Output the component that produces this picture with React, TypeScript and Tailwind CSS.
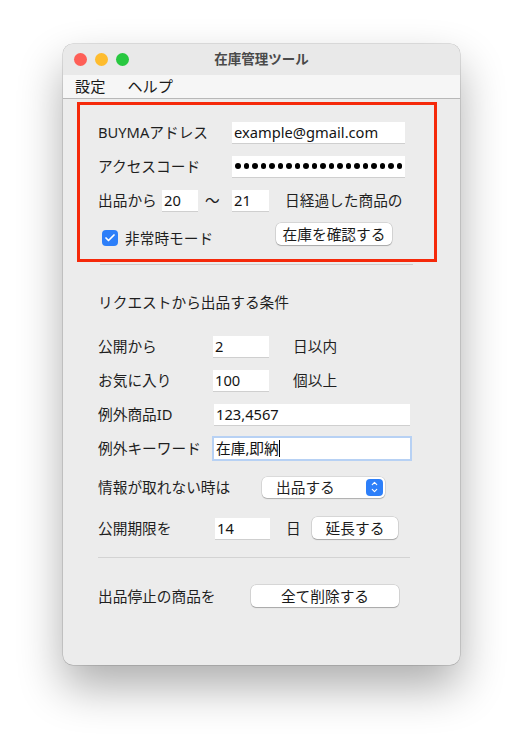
import { Check, ChevronUp, ChevronDown } from "lucide-react";

const FONT = {
  fontFamily: '"Noto Sans", "Noto Sans CJK JP", sans-serif',
};

function Field({ value, width, focused }: { value?: string; width: string; focused?: boolean }) {
  return (
    <div
      className={`${width} h-[21px] bg-white flex items-center pl-[2px] overflow-hidden whitespace-nowrap text-[#141414] ${
        focused
          ? "outline outline-[2px] outline-[#b7d1f4] h-[20px]"
          : "shadow-[0_1px_0_#cfcfcf]"
      }`}
    >
      {value}
      {focused && <span className="inline-block w-px h-[17px] bg-black" />}
    </div>
  );
}

function Button({ label, width }: { label: string; width: string }) {
  return (
    <div
      className={`${width} h-[22px] bg-white rounded-[5px] flex items-center justify-center text-[#1a1a1a] shadow-[0_0_0_0.5px_rgba(0,0,0,0.18),0_1px_1px_rgba(0,0,0,0.22)]`}
    >
      {label}
    </div>
  );
}

function PasswordField() {
  return (
    <div className="w-[173px] h-[21px] bg-white shadow-[0_1px_0_#cfcfcf] flex items-center gap-[3px] pl-[3px] overflow-hidden">
      {Array.from({ length: 24 }).map((_, i) => (
        <span key={i} className="shrink-0 w-[5.5px] h-[5.5px] rounded-full bg-black" />
      ))}
    </div>
  );
}

export default function App() {
  return (
    <div className="min-h-[750px] bg-white pt-[44px]" style={FONT}>
      <div className="mx-auto w-[397px] h-[621px] rounded-[10px] bg-[#ececec] overflow-hidden shadow-[0_22px_45px_rgba(0,0,0,0.32),0_0_0_0.5px_rgba(0,0,0,0.22)] text-[14.7px] text-[#1f1f1f]">
        {/* title bar */}
        <div className="h-[31px] bg-[#e9e9e9] flex items-center relative">
          <div className="flex items-center gap-[8px] pl-[11px]">
            <span className="w-[13px] h-[13px] rounded-full bg-[#fe5f57]" />
            <span className="w-[13px] h-[13px] rounded-full bg-[#febc2e]" />
            <span className="w-[13px] h-[13px] rounded-full bg-[#28c840]" />
          </div>
          <div className="absolute inset-0 flex items-center justify-center text-[13.5px] font-semibold text-[#4a4a4a]">
            在庫管理ツール
          </div>
        </div>

        {/* menu bar */}
        <div className="h-[24px] bg-[#f6f6f6] border-b border-[#b8b8b8] flex items-center gap-[22px] pl-[12px] text-[15.2px] text-[#1a1a1a]">
          <span>設定</span>
          <span>ヘルプ</span>
        </div>

        {/* highlighted section */}
        <div className="ml-[14px] mr-[23px] mt-[3px] h-[160px] border-[3px] border-[#f5290a] pl-[18px] pt-[10px]">
          <div className="h-[34px] flex items-center">
            <span className="w-[134px]">BUYMAアドレス</span>
            <Field value="example@gmail.com" width="w-[173px]" />
          </div>
          <div className="h-[34px] flex items-center">
            <span className="w-[134px]">アクセスコード</span>
            <PasswordField />
          </div>
          <div className="h-[34px] flex items-center">
            <span className="w-[64px]">出品から</span>
            <Field value="20" width="w-[36px]" />
            <span className="w-[34px] pl-[7px]">〜</span>
            <Field value="21" width="w-[37px]" />
            <span className="ml-[16px]">日経過した商品の</span>
          </div>
          <div className="h-[34px] flex items-center">
            <div className="w-[178px] flex items-center gap-[7px] pl-[4px] mt-[9px]">
              <span className="w-[16px] h-[16px] rounded-[4px] bg-[#2d7ff9] flex items-center justify-center">
                <Check size={12} strokeWidth={3.5} color="white" />
              </span>
              <span>非常時モード</span>
            </div>
            <Button label="在庫を確認する" width="w-[116px]" />
          </div>
        </div>
        <div className="mt-[2px] ml-[37px] w-[313px] h-px bg-[#cdcdcd]" />

        {/* request conditions */}
        <div className="pl-[35px]">
          <div className="mt-[20px] h-[34px] flex items-center">リクエストから出品する条件</div>
          <div className="mt-[10px] h-[34px] flex items-center">
            <span className="w-[115px]">公開から</span>
            <Field value="2" width="w-[56px]" />
            <span className="ml-[24px]">日以内</span>
          </div>
          <div className="h-[34px] flex items-center">
            <span className="w-[115px]">お気に入り</span>
            <Field value="100" width="w-[56px]" />
            <span className="ml-[24px]">個以上</span>
          </div>
          <div className="h-[34px] flex items-center">
            <span className="w-[116px]">例外商品ID</span>
            <Field value="123,4567" width="w-[196px]" />
          </div>
          <div className="h-[34px] flex items-center">
            <span className="w-[116px]">例外キーワード</span>
            <Field value="在庫,即納" width="w-[196px]" focused />
          </div>
          <div className="mt-[5px] h-[34px] flex items-center">
            <span className="w-[164px]">情報が取れない時は</span>
            <div className="w-[123px] h-[21px] bg-white rounded-[5px] flex items-center justify-between pl-[14px] pr-[2px] shadow-[0_0_0_0.5px_rgba(0,0,0,0.15),0_1px_1px_rgba(0,0,0,0.2)]">
              <span>出品する</span>
              <span className="w-[17px] h-[17px] rounded-[4px] bg-[#2d7ff9] flex flex-col items-center justify-center text-white">
                <ChevronUp size={9} strokeWidth={3} className="-mb-[1px]" />
                <ChevronDown size={9} strokeWidth={3} className="-mt-[1px]" />
              </span>
            </div>
          </div>
          <div className="mt-[7px] h-[34px] flex items-center">
            <span className="w-[117px]">公開期限を</span>
            <Field value="14" width="w-[55px]" />
            <span className="ml-[16px] w-[26px]">日</span>
            <Button label="延長する" width="w-[86px]" />
          </div>
          <div className="mt-[12px] w-[312px] h-px bg-[#d3d3d3]" />
          <div className="mt-[21px] h-[34px] flex items-center">
            <span className="w-[153px]">出品停止の商品を</span>
            <Button label="全て削除する" width="w-[148px]" />
          </div>
        </div>
      </div>
    </div>
  );
}
